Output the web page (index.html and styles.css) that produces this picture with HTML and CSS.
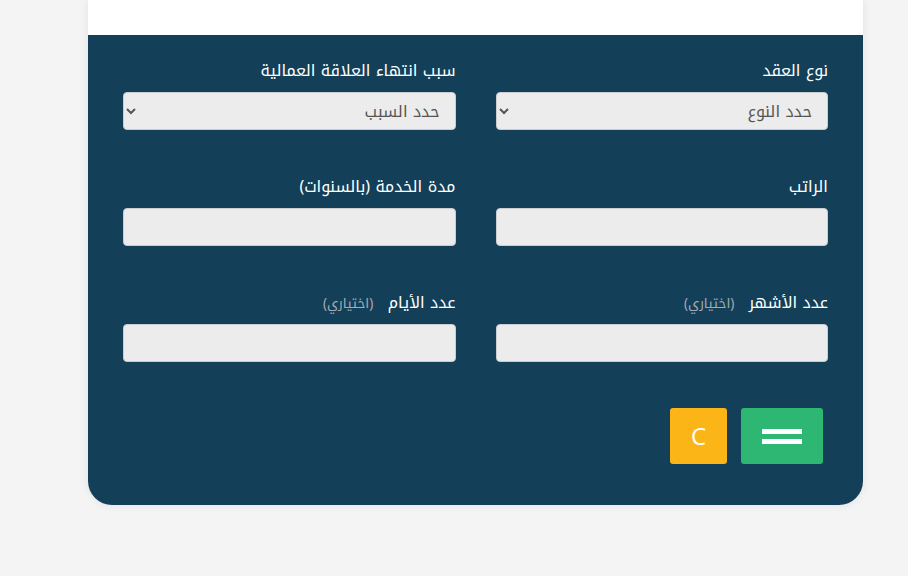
FILE: index.html
```html
<!DOCTYPE html>
<html lang="ar" dir="rtl">
<head>
<meta charset="utf-8">
<title>حاسبة نهاية الخدمة</title>
<link rel="stylesheet" href="styles.css">
</head>
<body>
<div class="card">
  <div class="card-top"></div>
  <form class="card-form">
    <div class="grid">
      <div class="field">
        <label class="label">نوع العقد</label>
        <select class="control select">
          <option>حدد النوع</option>
        </select>
      </div>
      <div class="field">
        <label class="label">سبب انتهاء العلاقة العمالية</label>
        <select class="control select">
          <option>حدد السبب</option>
        </select>
      </div>
      <div class="field">
        <label class="label">الراتب</label>
        <input class="control" type="text">
      </div>
      <div class="field">
        <label class="label">مدة الخدمة (بالسنوات)</label>
        <input class="control" type="text">
      </div>
      <div class="field">
        <label class="label">عدد الأشهر <span class="optional">(اختياري)</span></label>
        <input class="control" type="text">
      </div>
      <div class="field">
        <label class="label">عدد الأيام <span class="optional">(اختياري)</span></label>
        <input class="control" type="text">
      </div>
    </div>
    <div class="actions">
      <button type="button" class="btn btn-calc" aria-label="احسب">
        <svg width="40" height="15" viewBox="0 0 40 15"><rect x="0" y="0" width="40" height="5" fill="#fff"/><rect x="0" y="10" width="40" height="5" fill="#fff"/></svg>
      </button>
      <button type="button" class="btn btn-clear">C</button>
    </div>
  </form>
</div>
</body>
</html>
```
FILE: styles.css
```css
html, body {
  margin: 0;
  padding: 0;
}
body {
  background: #f4f4f4;
  font-family: "Noto Kufi Arabic", "DejaVu Sans", sans-serif;
  height: 576px;
  overflow: hidden;
}
.card {
  width: 775px;
  margin-right: 45px;
  background: #fff;
  border-radius: 0 0 24px 24px;
  box-shadow: 0 0 10px rgba(0, 0, 0, 0.08);
  overflow: hidden;
}
.card-top {
  height: 35px;
  background: #fff;
}
.card-form {
  background: #133f59;
  padding: 24px 35px 41px;
}
.grid {
  display: grid;
  grid-template-columns: 1fr 1fr;
  column-gap: 40px;
  row-gap: 45px;
}
.field {
  display: flex;
  flex-direction: column;
}
.label {
  color: #fff;
  font-size: 16px;
  line-height: 24px;
  height: 24px;
  margin-bottom: 9px;
  white-space: nowrap;
}
.optional {
  color: #a3acb2;
  font-size: 13.5px;
  margin-right: 9px;
}
.control {
  box-sizing: border-box;
  height: 38px;
  width: 100%;
  background: #ececec;
  border: 1px solid #c9cdd0;
  border-radius: 4px;
  font-family: "Noto Kufi Arabic", "DejaVu Sans", sans-serif;
  font-size: 16px;
  color: #555;
  padding: 0 16px;
  margin: 0;
}
.select {
  padding: 0 11px 0 6px;
}
.actions {
  display: flex;
  gap: 14px;
  margin-top: 46px;
  padding-right: 5px;
}
.btn {
  height: 56px;
  border: none;
  border-radius: 3px;
  display: flex;
  align-items: center;
  justify-content: center;
  padding: 0;
  cursor: pointer;
}
.btn-calc {
  width: 82px;
  background: #2eb673;
}
.btn-clear {
  width: 57px;
  background: #fbb516;
  color: #fff;
  font-family: "Open Sans", sans-serif;
  font-size: 24px;
  line-height: 1;
}
```
